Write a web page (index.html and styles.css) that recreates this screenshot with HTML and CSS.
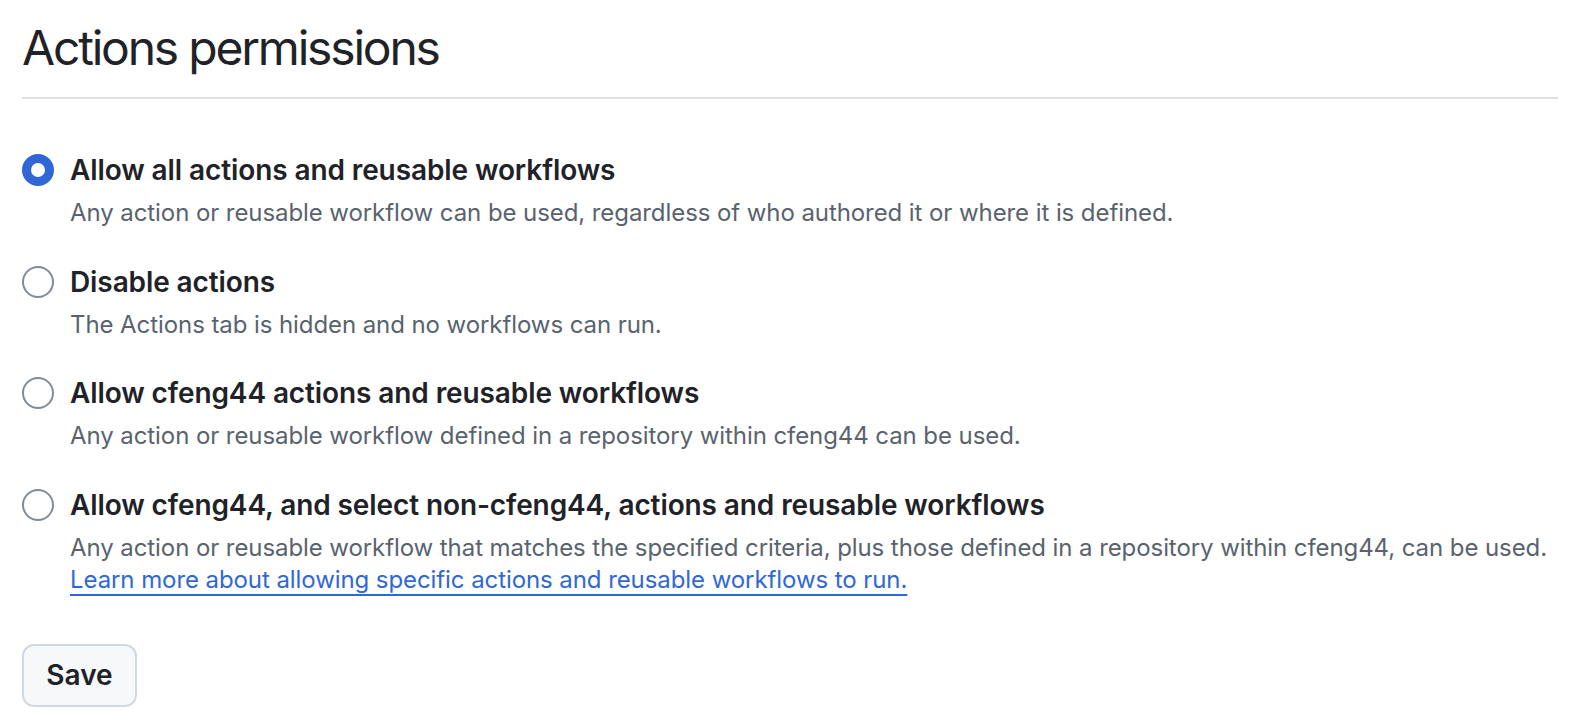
FILE: index.html
```html
<!DOCTYPE html>
<html lang="en">
<head>
<meta charset="utf-8">
<link rel="stylesheet" href="styles.css">
</head>
<body>
<div class="page">
  <h1 class="title">Actions permissions</h1>
  <div class="options">
    <div class="option">
      <span class="radio checked"></span>
      <div class="text">
        <div class="label">Allow all actions and reusable workflows</div>
        <div class="desc">Any action or reusable workflow can be used, regardless of who authored it or where it is defined.</div>
      </div>
    </div>
    <div class="option">
      <span class="radio"></span>
      <div class="text">
        <div class="label">Disable actions</div>
        <div class="desc">The Actions tab is hidden and no workflows can run.</div>
      </div>
    </div>
    <div class="option">
      <span class="radio"></span>
      <div class="text">
        <div class="label">Allow cfeng44 actions and reusable workflows</div>
        <div class="desc">Any action or reusable workflow defined in a repository within cfeng44 can be used.</div>
      </div>
    </div>
    <div class="option">
      <span class="radio"></span>
      <div class="text">
        <div class="label">Allow cfeng44, and select non-cfeng44, actions and reusable workflows</div>
        <div class="desc">Any action or reusable workflow that matches the specified criteria, plus those defined in a repository within cfeng44, can be used.<br><a class="link" href="#">Learn more about allowing specific actions and reusable workflows to run.</a></div>
      </div>
    </div>
  </div>
  <button class="btn">Save</button>
</div>
</body>
</html>
```
FILE: styles.css
```css
html, body {
  margin: 0;
  padding: 0;
  background: #ffffff;
}
body {
  font-family: Inter, "Noto Sans", "Liberation Sans", sans-serif;
  color: #1f2328;
}
.page {
  padding: 18px 14px 0 22px;
}
.title {
  margin: 0;
  font-size: 48px;
  font-weight: 400;
  line-height: 60px;
  padding-bottom: 19px;
  border-bottom: 2px solid #dde1e6;
  letter-spacing: -2.2px;
}
.options {
  display: flex;
  flex-direction: column;
  gap: 32.5px;
  margin-top: 51px;
}
.option {
  display: flex;
  align-items: flex-start;
  gap: 16px;
}
.radio {
  flex: none;
  width: 32px;
  height: 32px;
  margin-top: 4px;
  box-sizing: border-box;
  border-radius: 50%;
  border: 2px solid #818b98;
  background: #fff;
}
.radio.checked {
  border: 9px solid #2f68d6;
}
.label {
  font-size: 28px;
  font-weight: 600;
  line-height: 40px;
  letter-spacing: -0.1px;
}
.desc {
  margin-top: 7px;
  font-size: 24px;
  line-height: 32px;
  color: #59636e;
  letter-spacing: -0.08px;
}
.link {
  color: #2f68d6;
  text-decoration: underline;
  text-decoration-thickness: 2px;
  text-underline-offset: 6px;
}
.btn {
  margin-top: 48px;
  width: 115px;
  height: 63px;
  border: 2px solid #d1d9e0;
  border-radius: 12px;
  background: #f6f8fa;
  font-family: Inter, "Noto Sans", "Liberation Sans", sans-serif;
  font-size: 28px;
  font-weight: 600;
  color: #1f2328;
  padding: 0;
}
```
